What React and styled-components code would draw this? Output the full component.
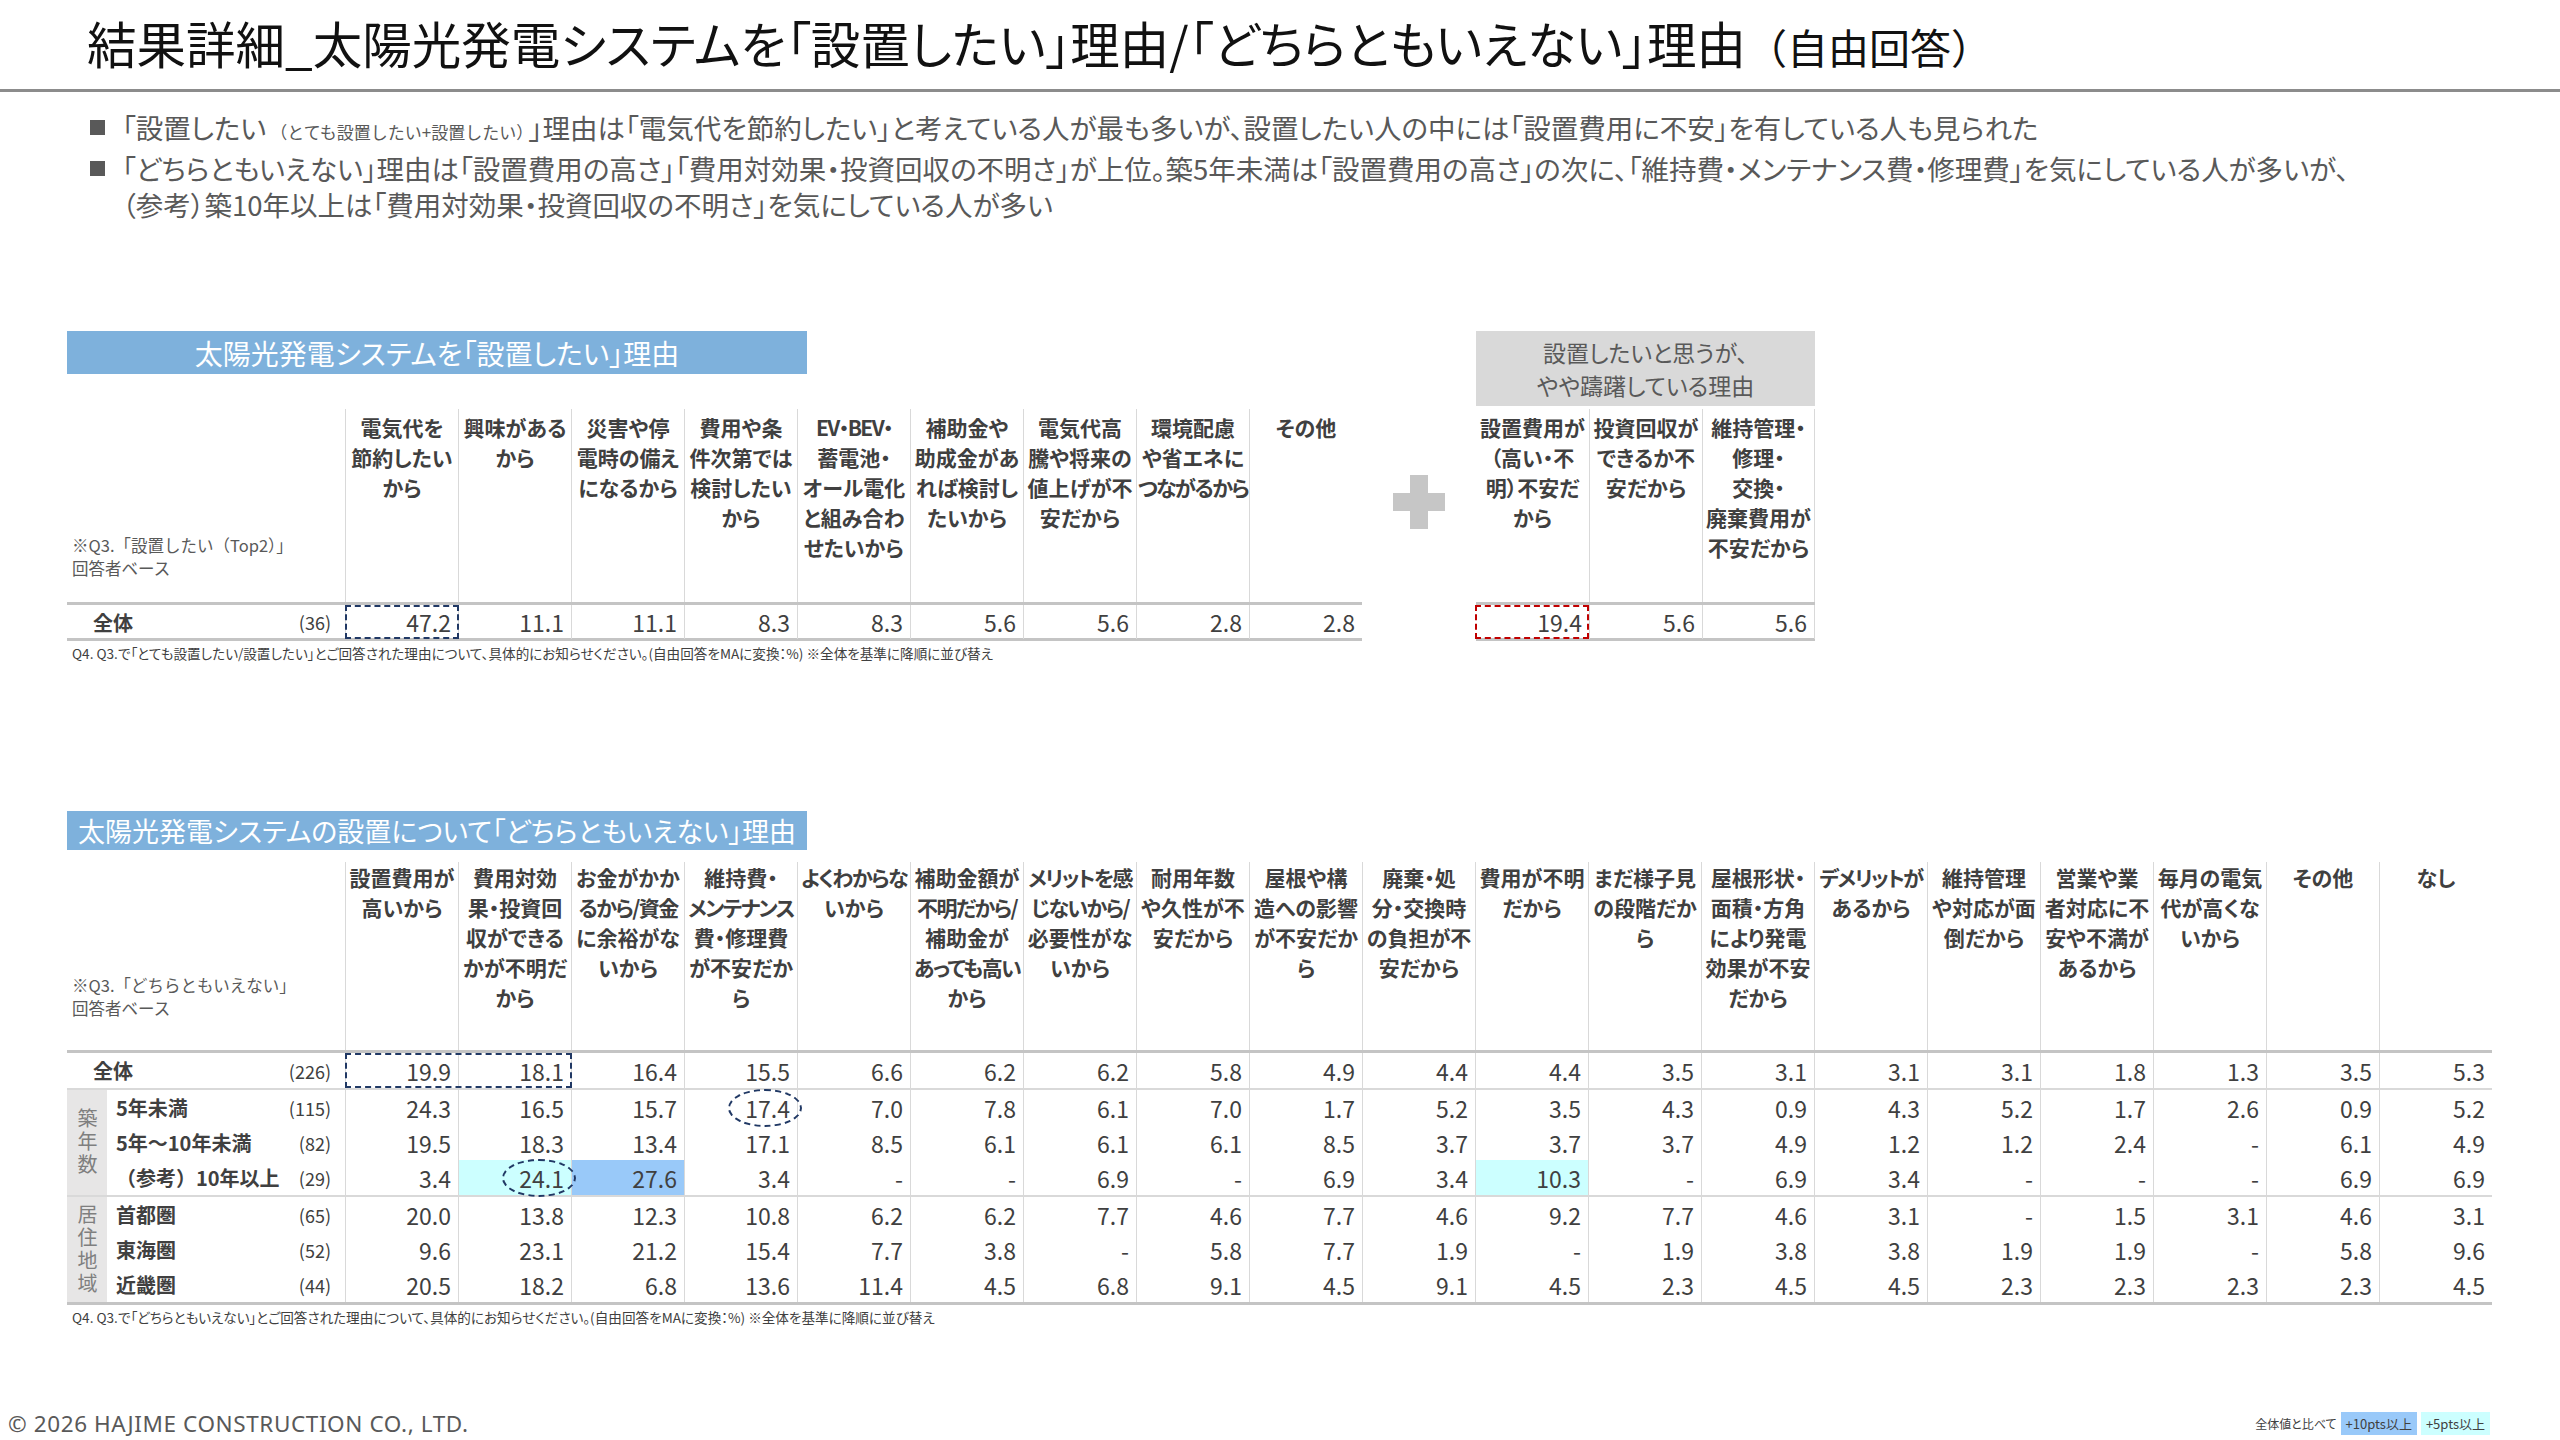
import React from 'react';
import styled, { createGlobalStyle } from 'styled-components';

const GlobalStyle = createGlobalStyle`
  html, body {
    margin: 0;
    padding: 0;
    background: #ffffff;
  }
  body {
    font-family: "Noto Sans CJK JP", "Noto Sans", sans-serif;
    color: #404040;
    font-feature-settings: "palt";
  }
`;

const COL = 113;
const NAVY = '#203864';
const RED = '#c00000';
const BLUE_HI = '#99c9f9';
const CYAN_HI = '#ccffff';

const Page = styled.div`
  width: 2560px;
  height: 1440px;
  display: flex;
  flex-direction: column;
  overflow: hidden;
`;

const TitleBar = styled.header`
  height: 92px;
  box-sizing: border-box;
  border-bottom: 3px solid #8c8c8c;
  padding: 0 0 5px 87px;
  display: flex;
  align-items: center;
`;

const Title = styled.h1`
  margin: 0;
  font-size: 49.5px;
  font-weight: 400;
  color: #111111;
  white-space: nowrap;
`;

const TitleSub = styled.span`
  font-size: 41px;
  margin-left: 0;
  font-feature-settings: normal;
`;

const Bullets = styled.ul`
  list-style: none;
  margin: 17px 0 0 90px;
  padding: 0;
`;

const Bullet = styled.li`
  display: flex;
  font-size: 27.5px;
  line-height: 36px;
  color: #595959;
  & + & {
    margin-top: 5px;
  }
  &::before {
    content: '';
    flex: 0 0 15px;
    height: 15px;
    margin: 11px 17px 0 0;
    background: #595959;
  }
`;

const Small = styled.span`
  font-size: 17px;
  line-height: 1;
  margin: 0 4px;
  font-feature-settings: normal;
`;

const Section = styled.section`
  display: flex;
  align-items: flex-start;
  padding-left: 67px;
  margin-top: ${(p) => p.$top}px;
`;

const Block = styled.div`
  width: ${(p) => p.$width}px;
  flex: 0 0 auto;
`;

const BlueHeader = styled.div`
  width: 740px;
  height: ${(p) => p.$h}px;
  margin-bottom: ${(p) => p.$gap}px;
  background: #7eb1dc;
  color: #ffffff;
  font-size: ${(p) => p.$size}px;
  display: flex;
  align-items: center;
  justify-content: center;
  white-space: nowrap;
`;

const GreyHeader = styled.div`
  height: 75px;
  margin-bottom: 3px;
  background: #d9d9d9;
  color: #595959;
  font-size: 23px;
  line-height: 33px;
  display: flex;
  flex-direction: column;
  align-items: center;
  justify-content: center;
`;

const Row = styled.div`
  display: grid;
  grid-template-columns: ${(p) => p.$cols};
  height: ${(p) => p.$h}px;
  box-sizing: border-box;
  border-top: ${(p) => (p.$top ? `${p.$top}px solid #c4c4c4` : 'none')};
  border-bottom: ${(p) => (p.$bottom ? `${p.$bottom}px solid #c4c4c4` : 'none')};
`;

const HeadCell = styled.div`
  border-left: ${(p) => (p.$noLeft ? 'none' : '1px solid #d9d9d9')};
  border-right: ${(p) => (p.$right ? '1px solid #d9d9d9' : 'none')};
  padding-top: ${(p) => p.$pt}px;
  text-align: center;
  font-size: 21px;
  line-height: 30px;
  font-weight: 700;
  color: #404040;
  white-space: nowrap;
`;

const HeadLine = styled.span`
  display: block;
  letter-spacing: ${(p) => (p.$tight ? '-1.6px' : '0')};
`;

const BaseNote = styled.div`
  display: flex;
  flex-direction: column;
  justify-content: flex-end;
  padding: 0 0 ${(p) => p.$pb}px 5px;
  font-size: 16.5px;
  line-height: 23px;
  color: #595959;
  white-space: nowrap;
  font-feature-settings: normal;
`;

const RowLabel = styled.div`
  display: flex;
  align-items: center;
  justify-content: space-between;
  padding: 0 14px 0 ${(p) => p.$indent}px;
  font-size: 20px;
  font-weight: 700;
  color: #404040;
  white-space: nowrap;
  font-feature-settings: normal;
`;

const Count = styled.span`
  font-size: 18px;
  font-weight: 400;
`;

const Value = styled.div`
  position: relative;
  display: flex;
  align-items: center;
  justify-content: flex-end;
  padding-right: 7px;
  font-size: 23px;
  color: #404040;
  background: ${(p) => p.$bg || 'transparent'};
  border-left: ${(p) => (p.$noLeft ? 'none' : '1px solid #d9d9d9')};
  border-right: ${(p) => (p.$right ? '1px solid #d9d9d9' : 'none')};

  &::after {
    content: '';
    display: ${(p) => (p.$box ? 'block' : 'none')};
    position: absolute;
    left: -1px;
    top: 0;
    bottom: 0;
    width: ${(p) => (p.$span || 1) * COL + 1}px;
    box-sizing: border-box;
    border: 2px dashed ${(p) => p.$box};
    z-index: 2;
  }

  &::before {
    content: '';
    display: ${(p) => (p.$circle ? 'block' : 'none')};
    position: absolute;
    right: -5px;
    top: 50%;
    width: 74px;
    height: 38px;
    transform: translateY(-50%);
    box-sizing: border-box;
    border: 2px dashed ${NAVY};
    border-radius: 50%;
    z-index: 2;
  }
`;

const Note = styled.div`
  margin-top: 3px;
  padding-left: 5px;
  font-size: 13.6px;
  line-height: 18px;
  color: #404040;
  white-space: nowrap;
`;

const PlusWrap = styled.div`
  width: 114px;
  flex: 0 0 auto;
  display: flex;
  justify-content: center;
  padding-top: 144px;
`;

const Group = styled.div`
  display: grid;
  grid-template-columns: 40px 1fr;
  border-top: 2px solid #d9d9d9;
`;

const GroupLabel = styled.div`
  background: #e7e6e6;
  display: flex;
  align-items: center;
  justify-content: center;
`;

const GroupText = styled.span`
  writing-mode: vertical-rl;
  text-orientation: upright;
  font-size: 20px;
  letter-spacing: 3px;
  line-height: 1;
  color: #7f7f7f;
  font-feature-settings: normal;
`;

const Footer = styled.footer`
  margin-top: auto;
  display: flex;
  align-items: center;
  justify-content: space-between;
  padding: 0 70px 4px 8px;
  height: 26px;
`;

const Copy = styled.div`
  font-family: "Noto Sans", "Liberation Sans", sans-serif;
  font-size: 22.5px;
  color: #595959;
  letter-spacing: 0.6px;
`;

const Legend = styled.div`
  display: flex;
  align-items: center;
  font-size: 12px;
  color: #404040;
`;

const Chip = styled.span`
  margin-left: 4px;
  padding: 2px 5px;
  font-size: 13px;
  background: ${(p) => p.$bg};
`;

const topCols = `278px repeat(9, ${COL}px)`;
const rightCols = `repeat(3, ${COL}px)`;
const bottomCols = `278px repeat(19, ${COL}px)`;
const subCols = `238px repeat(19, ${COL}px)`;

const topHeads = [
  ['電気代を', '節約したい', 'から'],
  ['興味がある', 'から'],
  ['災害や停', '電時の備え', 'になるから'],
  ['費用や条', '件次第では', '検討したい', 'から'],
  ['EV・BEV・', '蓄電池・', 'オール電化', 'と組み合わ', 'せたいから'],
  ['補助金や', '助成金があ', 'れば検討し', 'たいから'],
  ['電気代高', '騰や将来の', '値上げが不', '安だから'],
  ['環境配慮', 'や省エネに', 'つながるから'],
  ['その他'],
];
const topValues = ['47.2', '11.1', '11.1', '8.3', '8.3', '5.6', '5.6', '2.8', '2.8'];

const rightHeads = [
  ['設置費用が', '（高い・不', '明）不安だ', 'から'],
  ['投資回収が', 'できるか不', '安だから'],
  ['維持管理・', '修理・', '交換・', '廃棄費用が', '不安だから'],
];
const rightValues = ['19.4', '5.6', '5.6'];

const bottomHeads = [
  ['設置費用が', '高いから'],
  ['費用対効', '果・投資回', '収ができる', 'かが不明だ', 'から'],
  ['お金がかか', 'るから/資金', 'に余裕がな', 'いから'],
  ['維持費・', 'メンテナンス', '費・修理費', 'が不安だか', 'ら'],
  ['よくわからな', 'いから'],
  ['補助金額が', '不明だから/', '補助金が', 'あっても高い', 'から'],
  ['メリットを感', 'じないから/', '必要性がな', 'いから'],
  ['耐用年数', 'や久性が不', '安だから'],
  ['屋根や構', '造への影響', 'が不安だか', 'ら'],
  ['廃棄・処', '分・交換時', 'の負担が不', '安だから'],
  ['費用が不明', 'だから'],
  ['まだ様子見', 'の段階だか', 'ら'],
  ['屋根形状・', '面積・方角', 'により発電', '効果が不安', 'だから'],
  ['デメリットが', 'あるから'],
  ['維持管理', 'や対応が面', '倒だから'],
  ['営業や業', '者対応に不', '安や不満が', 'あるから'],
  ['毎月の電気', '代が高くな', 'いから'],
  ['その他'],
  ['なし'],
];

const totalRow = {
  label: '全体',
  n: '(226)',
  values: ['19.9', '18.1', '16.4', '15.5', '6.6', '6.2', '6.2', '5.8', '4.9', '4.4', '4.4', '3.5', '3.1', '3.1', '3.1', '1.8', '1.3', '3.5', '5.3'],
  marks: { 0: { box: NAVY, span: 2 } },
};

const groups = [
  {
    name: '築年数',
    rows: [
      {
        label: '5年未満',
        n: '(115)',
        values: ['24.3', '16.5', '15.7', '17.4', '7.0', '7.8', '6.1', '7.0', '1.7', '5.2', '3.5', '4.3', '0.9', '4.3', '5.2', '1.7', '2.6', '0.9', '5.2'],
        marks: { 3: { circle: true } },
      },
      {
        label: '5年～10年未満',
        n: '(82)',
        values: ['19.5', '18.3', '13.4', '17.1', '8.5', '6.1', '6.1', '6.1', '8.5', '3.7', '3.7', '3.7', '4.9', '1.2', '1.2', '2.4', '-', '6.1', '4.9'],
      },
      {
        label: '（参考）10年以上',
        n: '(29)',
        values: ['3.4', '24.1', '27.6', '3.4', '-', '-', '6.9', '-', '6.9', '3.4', '10.3', '-', '6.9', '3.4', '-', '-', '-', '6.9', '6.9'],
        marks: { 1: { bg: CYAN_HI, circle: true }, 2: { bg: BLUE_HI }, 10: { bg: CYAN_HI } },
      },
    ],
  },
  {
    name: '居住地域',
    rows: [
      {
        label: '首都圏',
        n: '(65)',
        values: ['20.0', '13.8', '12.3', '10.8', '6.2', '6.2', '7.7', '4.6', '7.7', '4.6', '9.2', '7.7', '4.6', '3.1', '-', '1.5', '3.1', '4.6', '3.1'],
      },
      {
        label: '東海圏',
        n: '(52)',
        values: ['9.6', '23.1', '21.2', '15.4', '7.7', '3.8', '-', '5.8', '7.7', '1.9', '-', '1.9', '3.8', '3.8', '1.9', '1.9', '-', '5.8', '9.6'],
      },
      {
        label: '近畿圏',
        n: '(44)',
        values: ['20.5', '18.2', '6.8', '13.6', '11.4', '4.5', '6.8', '9.1', '4.5', '9.1', '4.5', '2.3', '4.5', '4.5', '2.3', '2.3', '2.3', '2.3', '4.5'],
      },
    ],
  },
];

function Head({ lines, ...rest }) {
  return (
    <HeadCell {...rest}>
      {lines.map((l) => (
        <HeadLine key={l} $tight={l.length >= 6}>
          {l}
        </HeadLine>
      ))}
    </HeadCell>
  );
}

function Values({ values, marks = {} }) {
  return values.map((v, i) => {
    const m = marks[i] || {};
    return (
      <Value key={i} $bg={m.bg} $box={m.box} $span={m.span} $circle={m.circle}>
        {v}
      </Value>
    );
  });
}

function Plus() {
  return (
    <svg width="52" height="54" viewBox="0 0 52 54">
      <rect x="17" y="0" width="18" height="54" fill="#c6c6c6" />
      <rect x="0" y="18" width="52" height="18" fill="#c6c6c6" />
    </svg>
  );
}

export default function App() {
  return (
    <Page>
      <GlobalStyle />
      <TitleBar>
        <Title>
          結果詳細_太陽光発電システムを「設置したい」理由/「どちらともいえない」理由
          <TitleSub>（自由回答）</TitleSub>
        </Title>
      </TitleBar>

      <Bullets>
        <Bullet>
          <div>
            「設置したい<Small>（とても設置したい+設置したい）</Small>」理由は「電気代を節約したい」と考えている人が最も多いが、設置したい人の中には「設置費用に不安」を有している人も見られた
          </div>
        </Bullet>
        <Bullet>
          <div>
            「どちらともいえない」理由は「設置費用の高さ」「費用対効果・投資回収の不明さ」が上位。築5年未満は「設置費用の高さ」の次に、「維持費・メンテナンス費・修理費」を気にしている人が多いが、
            <br />
            （参考）築10年以上は「費用対効果・投資回収の不明さ」を気にしている人が多い
          </div>
        </Bullet>
      </Bullets>

      <Section $top={109}>
        <Block $width={1295}>
          <BlueHeader $h={43} $gap={35} $size={28}>
            太陽光発電システムを「設置したい」理由
          </BlueHeader>
          <Row $cols={topCols} $h={193}>
            <BaseNote $pb={22}>
              <div>※Q3.「設置したい（Top2）」</div>
              <div>回答者ベース</div>
            </BaseNote>
            {topHeads.map((h, i) => (
              <Head key={i} lines={h} $pt={3} />
            ))}
          </Row>
          <Row $cols={topCols} $h={39} $top={3} $bottom={3}>
            <RowLabel $indent={26}>
              全体<Count>(36)</Count>
            </RowLabel>
            <Values values={topValues} marks={{ 0: { box: NAVY } }} />
          </Row>
          <Note>
            Q4. Q3.で「とても設置したい/設置したい」とご回答された理由について、具体的にお知らせください。(自由回答をMAに変換：%) ※全体を基準に降順に並び替え
          </Note>
        </Block>

        <PlusWrap>
          <Plus />
        </PlusWrap>

        <Block $width={339}>
          <GreyHeader>
            <div>設置したいと思うが、</div>
            <div>やや躊躇している理由</div>
          </GreyHeader>
          <Row $cols={rightCols} $h={193}>
            {rightHeads.map((h, i) => (
              <Head key={i} lines={h} $pt={3} $noLeft={i === 0} $right={i === 2} />
            ))}
          </Row>
          <Row $cols={rightCols} $h={39} $top={3} $bottom={3}>
            {rightValues.map((v, i) => (
              <Value key={i} $noLeft={i === 0} $right={i === 2} $box={i === 0 ? RED : null}>
                {v}
              </Value>
            ))}
          </Row>
        </Block>
      </Section>

      <Section $top={149}>
        <Block $width={2425}>
          <BlueHeader $h={39} $gap={12} $size={27}>
            太陽光発電システムの設置について「どちらともいえない」理由
          </BlueHeader>
          <Row $cols={bottomCols} $h={188}>
            <BaseNote $pb={30}>
              <div>※Q3.「どちらともいえない」</div>
              <div>回答者ベース</div>
            </BaseNote>
            {bottomHeads.map((h, i) => (
              <Head key={i} lines={h} $pt={0} />
            ))}
          </Row>
          <Row $cols={bottomCols} $h={38} $top={3}>
            <RowLabel $indent={26}>
              {totalRow.label}
              <Count>{totalRow.n}</Count>
            </RowLabel>
            <Values values={totalRow.values} marks={totalRow.marks} />
          </Row>
          {groups.map((g) => (
            <Group key={g.name}>
              <GroupLabel>
                <GroupText>{g.name}</GroupText>
              </GroupLabel>
              <div>
                {g.rows.map((r) => (
                  <Row key={r.label} $cols={subCols} $h={35}>
                    <RowLabel $indent={9}>
                      {r.label}
                      <Count>{r.n}</Count>
                    </RowLabel>
                    <Values values={r.values} marks={r.marks} />
                  </Row>
                ))}
              </div>
            </Group>
          ))}
          <Row $cols={bottomCols} $h={3} $top={3} />
          <Note>
            Q4. Q3.で「どちらともいえない」とご回答された理由について、具体的にお知らせください。(自由回答をMAに変換：%) ※全体を基準に降順に並び替え
          </Note>
        </Block>
      </Section>

      <Footer>
        <Copy>© 2026 HAJIME CONSTRUCTION CO., LTD.</Copy>
        <Legend>
          全体値と比べて
          <Chip $bg={BLUE_HI}>+10pts以上</Chip>
          <Chip $bg={CYAN_HI}>+5pts以上</Chip>
        </Legend>
      </Footer>
    </Page>
  );
}
